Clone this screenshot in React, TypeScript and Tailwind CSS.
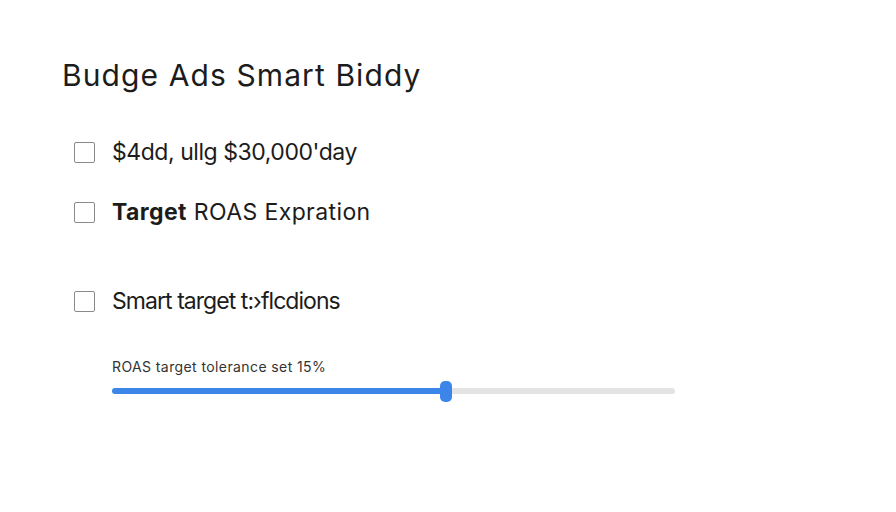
export default function App() {
  return (
    <div className="h-[512px] w-[896px] bg-white text-[#1c1c1c] font-['Inter',sans-serif]">
      <div className="pl-[62px] pt-[57px]">
        <h1 className="text-[30px] leading-[36px] font-normal tracking-[1.1px]">
          Budge Ads Smart Biddy
        </h1>

        <div className="mt-[48px] flex flex-col gap-[38px] pl-[12px]">
          <label className="flex items-center gap-[17px] h-[22px]">
            <span className="h-[21px] w-[21px] border-[1.5px] border-[#8a8a8a] rounded-[2px] bg-white" />
            <span className="text-[23px] leading-[22px] tracking-[-0.45px]">$4dd, ullg $30,000'day</span>
          </label>
          <label className="flex items-center gap-[17px] h-[22px]">
            <span className="h-[21px] w-[21px] border-[1.5px] border-[#8a8a8a] rounded-[2px] bg-white" />
            <span className="text-[23px] leading-[22px] tracking-[0.4px]">
              <b className="font-bold">Target</b> ROAS Expration
            </span>
          </label>
        </div>

        <label className="mt-[67px] flex items-center gap-[17px] h-[22px] pl-[12px]">
          <span className="h-[21px] w-[21px] border-[1.5px] border-[#8a8a8a] rounded-[2px] bg-white" />
          <span className="text-[23px] leading-[22px] tracking-[-0.95px]">Smart target t:›flcdions</span>
        </label>

        {/* slider */}
        <div className="mt-[46px] pl-[50px] w-[613px]">
          <div className="text-[14px] leading-[18px] tracking-[0.4px] text-[#333]">
            ROAS target tolerance set 15%
          </div>
          <div className="mt-[4px] flex items-center h-[22px]">
            <div className="h-[6px] w-[328px] rounded-l-full bg-[#3b86e8]" />
            <div className="h-[21px] w-[12px] rounded-[5px] bg-[#3b86e8]" />
            <div className="h-[6px] flex-1 rounded-r-full bg-[#e3e3e3]" />
          </div>
        </div>
      </div>
    </div>
  );
}
